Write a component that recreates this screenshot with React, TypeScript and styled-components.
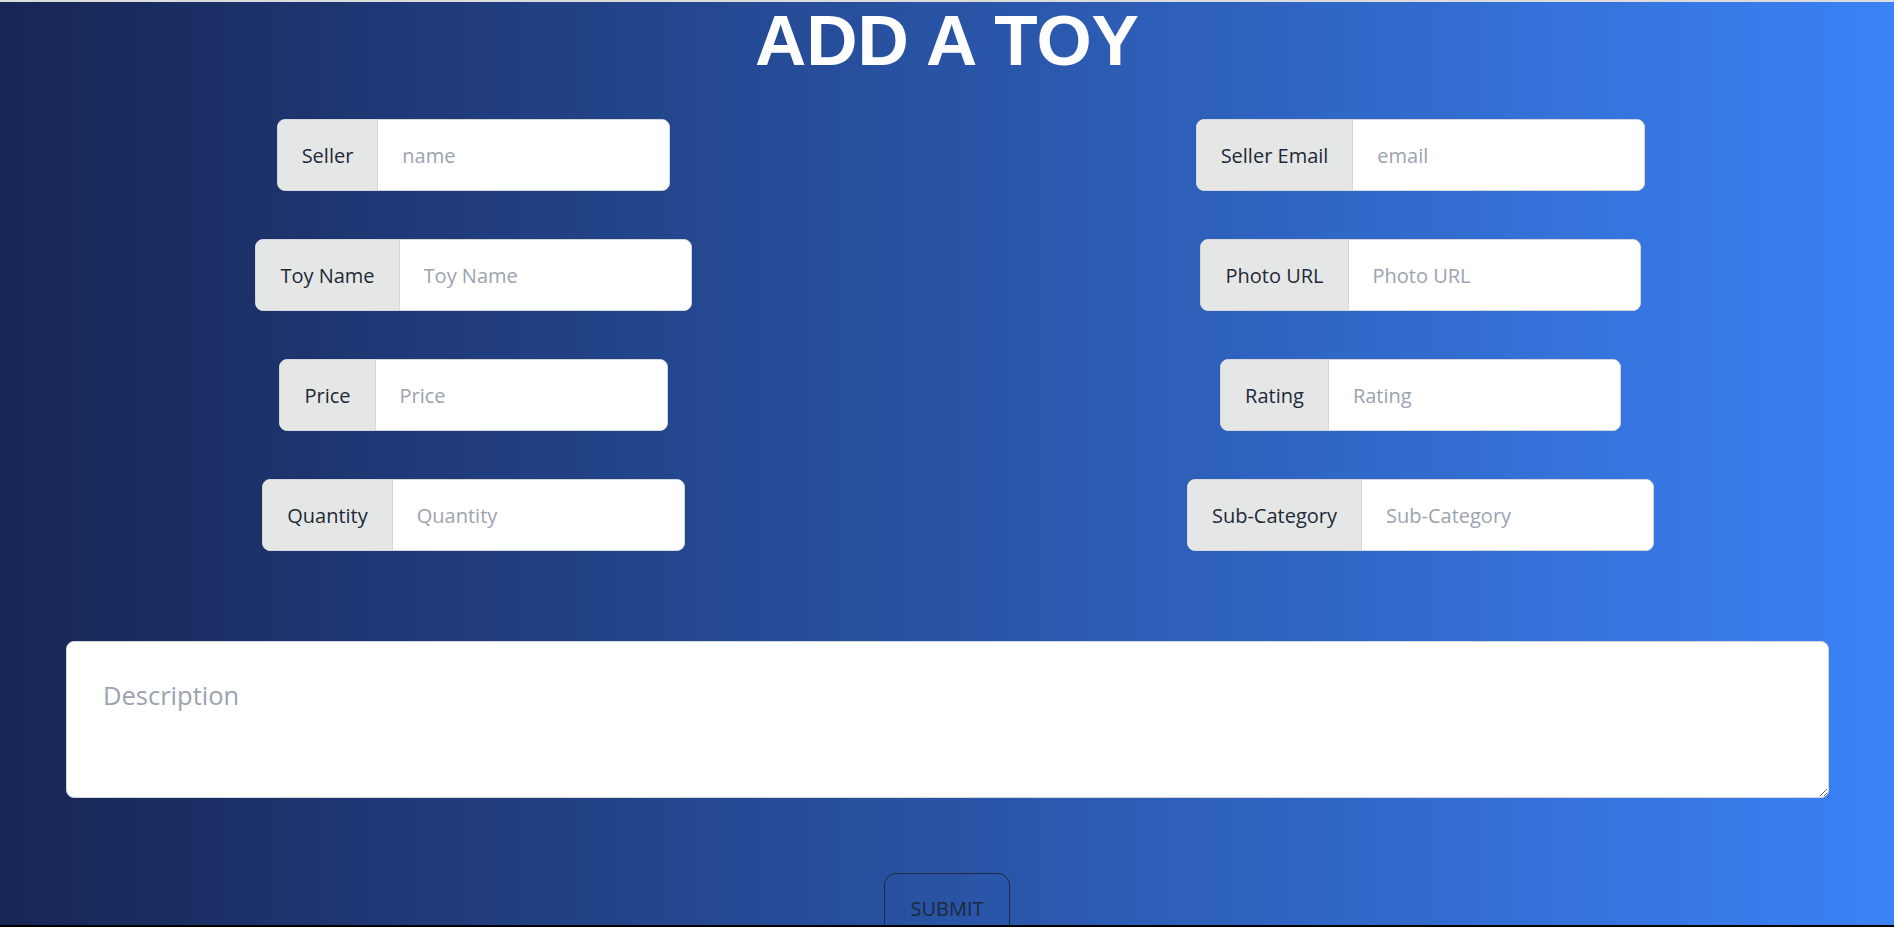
import React from "react";
import styled, { createGlobalStyle } from "styled-components";

const GlobalStyle = createGlobalStyle`
  html, body {
    margin: 0;
    padding: 0;
  }
  body {
    font-family: "Open Sans", "Noto Sans", sans-serif;
  }
  * {
    box-sizing: border-box;
  }
`;

const Page = styled.div`
  height: 927px;
  display: flex;
  flex-direction: column;
  overflow: hidden;
`;

const TopStrip = styled.div`
  height: 2px;
  flex-shrink: 0;
  background: #dcdcdc;
`;

const BottomStrip = styled.div`
  height: 2px;
  flex-shrink: 0;
  background: #000;
`;

const Main = styled.main`
  flex: 1;
  overflow: hidden;
  background: linear-gradient(to right, #172554, #3b82f6);
`;

const Title = styled.h1`
  margin: 4px 0 0;
  font-family: "Liberation Sans", Arial, sans-serif;
  font-weight: 700;
  font-size: 71px;
  line-height: 70px;
  color: #ffffff;
  text-align: center;
`;

const Form = styled.form`
  display: flex;
  flex-direction: column;
`;

const FieldGrid = styled.div`
  margin-top: 43px;
  display: grid;
  grid-template-columns: 1fr 1fr;
  row-gap: 48px;
  justify-items: center;
`;

const Group = styled.label`
  display: flex;
  height: 72px;
  border: 1px solid #d4d6da;
  border-radius: 8px;
  overflow: hidden;
  background: #fff;
`;

const GroupLabel = styled.span`
  display: flex;
  align-items: center;
  padding: 0 24px;
  background: #e5e6e6;
  border-right: 1px solid #d4d6da;
  color: #1f2937;
  font-size: 20px;
  white-space: nowrap;
`;

const Input = styled.input`
  width: 291px;
  border: none;
  outline: none;
  padding: 0 24px;
  font-family: inherit;
  font-size: 20px;
  color: #1f2937;
  background: #fff;
  &::placeholder {
    color: #9ca3af;
  }
`;

const DescriptionWrap = styled.div`
  margin-top: 90px;
  padding: 0 65px 0 66px;
`;

const Description = styled.textarea`
  display: block;
  width: 100%;
  height: 157px;
  padding: 34px 36px;
  border: 1px solid #d4d6da;
  border-radius: 8px;
  font-family: inherit;
  font-size: 25.5px;
  line-height: 1.5;
  color: #1f2937;
  background: #fff;
  outline: none;
  &::placeholder {
    color: #9ca3af;
  }
`;

const SubmitButton = styled.button`
  margin: 75px auto 0;
  display: block;
  padding: 20px 25px;
  border: 1px solid #1e293b;
  border-radius: 12px;
  background: transparent;
  color: #1e293b;
  font-family: inherit;
  font-size: 20px;
  line-height: 1.5;
  cursor: pointer;
`;

type Field = { label: string; name: string; placeholder: string };

const fields: Field[] = [
  { label: "Seller", name: "seller", placeholder: "name" },
  { label: "Seller Email", name: "email", placeholder: "email" },
  { label: "Toy Name", name: "toyName", placeholder: "Toy Name" },
  { label: "Photo URL", name: "photo", placeholder: "Photo URL" },
  { label: "Price", name: "price", placeholder: "Price" },
  { label: "Rating", name: "rating", placeholder: "Rating" },
  { label: "Quantity", name: "quantity", placeholder: "Quantity" },
  { label: "Sub-Category", name: "subCategory", placeholder: "Sub-Category" },
];

export default function App() {
  return (
    <>
      <GlobalStyle />
      <Page>
        <TopStrip />
        <Main>
          <Title>ADD A TOY</Title>
          <Form onSubmit={(e) => e.preventDefault()}>
            <FieldGrid>
              {fields.map((f) => (
                <Group key={f.name}>
                  <GroupLabel>{f.label}</GroupLabel>
                  <Input type="text" name={f.name} placeholder={f.placeholder} />
                </Group>
              ))}
            </FieldGrid>
            <DescriptionWrap>
              <Description name="description" placeholder="Description" />
            </DescriptionWrap>
            <SubmitButton type="submit">SUBMIT</SubmitButton>
          </Form>
        </Main>
        <BottomStrip />
      </Page>
    </>
  );
}
